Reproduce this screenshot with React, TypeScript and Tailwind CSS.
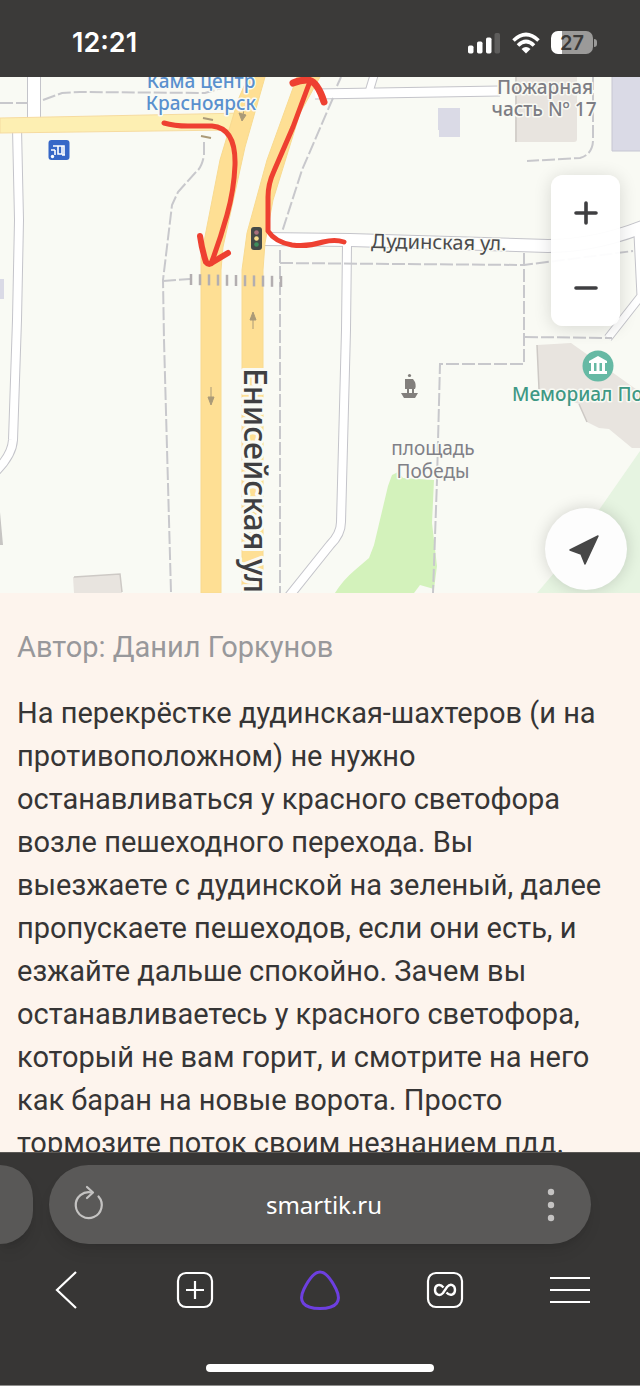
import React from "react";

type Road = { d: string; width: number };

const roads: Road[] = [
  { d: "M34 70V125", width: 14 },
  { d: "M17 128L19 220L17 320L13 440Q12 456 -6 473", width: 10 },
  { d: "M315 94L500 91", width: 11 },
  { d: "M369 92L375 72", width: 9 },
  { d: "M347 245L346 330L341 522Q341 534 330 545L286 600", width: 10 },
  { d: "M262 239L350 240L548 246Q595 246 645 226", width: 14 },
  { d: "M638 234L641 296L608 338", width: 9 },
];

const paths: string[] = [
  "M0 103H28",
  "M43 100L62 93L80 92L205 93L222 88",
  "M204 142L204 155Q202 168 195 173L178 192L172 205L163 280L164 340L171 593",
  "M163 281L190 279",
  "M333 98L302 170L282 232",
  "M280 250V593",
  "M280 263L524 265L633 251",
  "M524 253V364H440L437 480L433 593",
  "M525 337L612 338",
  "M593 77V140Q593 154 580 158L527 161",
  "M341 77L337 86",
];

function MapDrawing() {
  return (
    <svg
      viewBox="0 77 640 516"
      className="block w-full"
      role="img"
      aria-label="Карта: Дудинская ул. и Енисейская ул."
    >
      <rect x="0" y="77" width="640" height="516" fill="#f9faf4" />

      <g fill="#dadae6">
        <path d="M438 108H460V137H439V130H438Z" />
        <path d="M612 77H640V151H612Z" />
        <path d="M0 279H4V299H0Z" />
      </g>
      <path d="M612 77V151H640" fill="none" stroke="#c6c6d2" />
      <g fill="#e8e4df">
        <path d="M515 77H577V139Q577 142 574 142H515Z" />
        <path d="M537 345L571 343L640 392V448L632 448L609 429L599 428L587 422L579 404L539 389Z" />
        <path d="M73 577L120 574L122 593H74Z" />
      </g>
      <path d="M516 77V142M537 345L539 389M579 404L587 422M74 577L120 574L122 592" fill="none" stroke="#cdc9c5" strokeWidth="1.500" />
      <path d="M0 512L3 545H0Z" fill="#c7c5c3" />
      <path d="M392 475L398 472L403 478L434 480L432 523L437 566L434 589L420 585L414 593H335Q343 580 355 570L369 558L374 545L388 486Z" fill="#d3f2bb" />
      <path d="M640 451V593H537L560 566Z" fill="#e6f4e1" />

      <g fill="none" stroke="#c4c4ca" strokeLinejoin="round">
        {roads.map((r) => (
          <path key={r.d} d={r.d} strokeWidth={r.width} />
        ))}
      </g>
      <g fill="none" stroke="#ffffff" strokeLinejoin="round">
        {roads.map((r) => (
          <path key={r.d} d={r.d} strokeWidth={r.width - 2} />
        ))}
      </g>
      <g fill="none" stroke="#c8c8cc" strokeWidth="2" strokeDasharray="13 3">
        {paths.map((d) => (
          <path key={d} d={d} />
        ))}
      </g>

      <path d="M0 118L245 113L232 130L0 133Z" fill="#fdefb2" stroke="#f6dba0" />
      <g fill="#fedf94" stroke="#f8da90">
        <path d="M248 77H265L245 147L223 247L221 270V593H201V257L220 160L238 100Z" />
        <path d="M297 77H320L300 113L273 200L265 243L263 270V593H242V270L247 233L267 160Z" />
      </g>

      <g stroke="#b3aeb0" strokeWidth="2.500">
        {Array.from({ length: 11 }, (_, i) => (
          <path key={i} d={`M${191 + i * 9} ${274 + i / 5}V${285 + i / 5}`} />
        ))}
      </g>
      <g stroke="#aa9a78" fill="#aa9a78">
        <path d="M211 387V399" />
        <path d="M208 397L211 405L214 397Z" />
        <path d="M253 329V317" />
        <path d="M250 320L253 312L256 320Z" />
        <path d="M244 108L243 116" />
        <path d="M239 113L242 121L246 115Z" />
        <path d="M203 118L213 120M201 136L211 138" strokeWidth="2" />
      </g>

      <rect x="48.500" y="140" width="21" height="20" rx="3" fill="#3767c7" />
      <g fill="none" stroke="#ffffff" strokeWidth="1.6">
        <path d="M53 146H64V155M58 146V154H62V146M62 155H65M51 150H55" />
        <path d="M55 150V155" />
      </g>
      <circle cx="52.500" cy="156.500" r="1.700" fill="#ffffff" />

      <rect x="251" y="227" width="11" height="23" rx="3" fill="#454a47" />
      <circle cx="256.500" cy="232.500" r="2.300" fill="#a8707c" />
      <circle cx="256.500" cy="238.500" r="2.300" fill="#f6dc8a" />
      <circle cx="256.500" cy="244.500" r="2.300" fill="#3f8e5c" />

      <g fill="#827f7c">
        <circle cx="409.500" cy="375.500" r="1.600" />
        <path d="M405 379H413Q417 384 415 389H405Z" />
        <path d="M407 389H409V394H407ZM412 389H414V394H412Z" />
        <path d="M401 393H418L415 398H404Z" />
      </g>

      <circle cx="598" cy="366" r="15.500" fill="#66b9a4" />
      <g fill="#ffffff">
        <path d="M589 361L598 356L607 361V363H589Z" />
        <path d="M591 363H594V371H591ZM596.500 363H599.500V371H596.500ZM602 363H605V371H602Z" />
        <path d="M589 371H607V374H589Z" />
      </g>

      <g
        className="font-['Noto_Sans',sans-serif]"
        stroke="#f9faf4"
        strokeWidth="3"
        strokeLinejoin="round"
        paintOrder="stroke"
      >
        <g fill="#5990ce" fontSize="19" fontWeight="500" textAnchor="middle">
          <text x="201" y="88">Кама центр</text>
          <text x="201" y="110">Красноярск</text>
        </g>
        <g fill="#7d7d84" fontSize="19" fontWeight="500" textAnchor="middle">
          <text x="545" y="94">Пожарная</text>
          <text x="544" y="116">часть Nº 17</text>
        </g>
        <g fill="#808087" fontSize="19" textAnchor="middle">
          <text x="433" y="455">площадь</text>
          <text x="433" y="478">Победы</text>
        </g>
        <text x="512" y="401" fill="#3f9884" fontSize="19" fontWeight="500">Мемориал По</text>
        <text x="371" y="248" fill="#4a4a4c" fontSize="20" transform="rotate(1 370 248)">Дудинская ул.</text>
        <text x="0" y="0" fill="#3f3f41" fontSize="32" fontWeight="500" strokeWidth="6" transform="translate(244 368) rotate(90)">Енисейская ул</text>
      </g>

      <g fill="none" stroke="#ee4031" strokeWidth="5" strokeLinecap="round" strokeLinejoin="round">
        <path d="M164 123Q174 126 188 126H212Q236 128 235 165Q234 190 227 215Q220 240 212 261" />
        <path d="M200 236Q202 250 206 262Q209 266 213 262L228 253" strokeWidth="6" />
        <path d="M344 242Q335 239 323 242Q307 247 292 245Q275 242 268 231V197Q268 184 274 171L293 127L309 84" />
        <path d="M293 83Q300 80 307 80Q317 80 324 102" strokeWidth="7" />
      </g>
    </svg>
  );
}

function StatusBar() {
  return (
    <header className="flex h-[77px] shrink-0 items-center justify-between bg-[#3b3a39] pt-2 pr-[43px] pl-[72px]">
      <time className="font-['Inter',sans-serif] text-[27px] leading-8 font-semibold text-white">12:21</time>
      <div className="flex items-center gap-[11px]">
        <svg width="33" height="24" viewBox="0 0 33 24" aria-label="Сигнал">
          <rect x="0" y="14.500" width="5.500" height="8" rx="1.700" fill="#fff" />
          <rect x="9" y="10.500" width="5.500" height="12" rx="1.700" fill="#fff" />
          <rect x="18" y="6.500" width="5.500" height="16" rx="1.700" fill="#fff" />
          <rect x="26.500" y="2" width="5.500" height="20.500" rx="1.700" fill="#5e5d5c" />
        </svg>
        <svg width="28" height="22" viewBox="0 0 28 22" aria-label="Wi-Fi">
          <g fill="none" stroke="#fff" strokeWidth="3.600">
            <path d="M1.500 8.500Q14 -3.500 26.500 8.500" />
            <path d="M6 13.500Q14 5.500 22 13.500" />
          </g>
          <path d="M9.500 17Q14 13 18.500 17L14 21.500Z" fill="#fff" />
        </svg>
        <div className="flex items-center gap-px">
          <span className="flex h-[23px] w-[42px] items-center justify-center rounded-[7px] bg-linear-to-r from-white from-27% to-[#9b9a99] to-27% font-['Inter',sans-serif] text-[20px] leading-5 font-semibold text-[#3b3a39]">
            27
          </span>
          <span className="h-2 w-[3px] rounded-r-full bg-[#9b9a99]" />
        </div>
      </div>
    </header>
  );
}

function BrowserBar() {
  return (
    <footer className="shrink-0 border-t border-b border-t-[#5a5855] border-b-[#8f8e8c] bg-[#373635] pt-3">
      <div className="flex h-[79px] gap-4 pr-[49px]">
        <button type="button" aria-label="Предыдущая вкладка" className="w-[33px] rounded-r-full bg-[#595857] shadow-lg" />
        <div className="flex flex-1 items-center justify-between rounded-full bg-[#5a5958] px-6 shadow-lg">
          <button type="button" aria-label="Обновить">
            <svg width="40" height="40" viewBox="0 0 40 40" fill="none" stroke="#c4c3c2" strokeWidth="2.200" strokeLinecap="round" strokeLinejoin="round">
              <path d="M25.500 11.500A13 13 0 1 1 19 7.500" />
              <path d="M14 2L20 7.500L14 13" />
            </svg>
          </button>
          <a href="https://smartik.ru" className="font-['Noto_Sans',sans-serif] text-[24px] leading-8 text-white">
            smartik.ru
          </a>
          <button type="button" aria-label="Меню страницы">
            <svg width="32" height="36" viewBox="0 0 32 36" fill="#c4c3c2">
              <circle cx="16" cy="5" r="3.200" />
              <circle cx="16" cy="18" r="3.200" />
              <circle cx="16" cy="31" r="3.200" />
            </svg>
          </button>
        </div>
      </div>
      <nav className="grid h-[92px] grid-cols-5 place-items-center px-2">
        <button type="button" aria-label="Назад">
          <svg width="42" height="42" viewBox="0 0 42 42" fill="none" stroke="#fff" strokeWidth="2.200">
            <path d="M27 3L8 21L27 39" />
          </svg>
        </button>
        <button type="button" aria-label="Новая вкладка">
          <svg width="42" height="42" viewBox="0 0 42 42" fill="none" stroke="#fff" strokeWidth="2.200">
            <rect x="4" y="4" width="34" height="34" rx="8" />
            <path d="M21 12V30M12 21H30" />
          </svg>
        </button>
        <button type="button" aria-label="Алиса">
          <svg width="42" height="42" viewBox="0 0 42 42" fill="none" stroke="#6d3fe0" strokeWidth="3">
            <path d="M21 3C27 3 33 12 37 20C43 32 38 39.500 21 39.500S-1 32 5 20C9 12 15 3 21 3Z" />
          </svg>
        </button>
        <button type="button" aria-label="Вкладки">
          <svg width="42" height="42" viewBox="0 0 42 42" fill="none" stroke="#fff" strokeWidth="2.200">
            <rect x="4" y="4" width="34" height="34" rx="8" />
            <path d="M19.500 18.500C16 14 11 16 11 21S16 27.500 19 24L23 18C26.500 14 31 16 31 21S26 27.500 22.500 23.500" strokeWidth="2.400" />
          </svg>
        </button>
        <button type="button" aria-label="Меню">
          <svg width="42" height="42" viewBox="0 0 42 42" fill="none" stroke="#fff" strokeWidth="2.200">
            <path d="M1 9H41M1 21H41M1 33H41" />
          </svg>
        </button>
      </nav>
      <div className="flex h-[49px] items-center justify-center pt-[14px]">
        <div className="h-2 w-[228px] rounded-full bg-white" />
      </div>
    </footer>
  );
}

export default function App() {
  return (
    <div className="flex h-screen flex-col bg-[#fdf4ed]">
      <StatusBar />
      <main className="min-h-0 flex-1 overflow-y-auto [scrollbar-width:none]">
        <section className="relative">
          <MapDrawing />
          <div className="absolute top-[98px] right-5 flex h-[151px] w-[69px] flex-col rounded-xl bg-white/95 shadow-[0_2px_18px_rgba(0,0,0,0.14)]">
            <button type="button" aria-label="Приблизить" className="flex flex-1 items-center justify-center">
              <svg width="26" height="26" viewBox="0 0 26 26" stroke="#3f3f41" strokeWidth="3.600" strokeLinecap="round">
                <path d="M3 13H23M13 3V23" />
              </svg>
            </button>
            <button type="button" aria-label="Отдалить" className="flex flex-1 items-center justify-center">
              <svg width="26" height="26" viewBox="0 0 26 26" stroke="#3f3f41" strokeWidth="3.600" strokeLinecap="round">
                <path d="M3 13H23" />
              </svg>
            </button>
          </div>
          <button
            type="button"
            aria-label="Моё местоположение"
            className="absolute right-[13px] bottom-[3px] flex size-[82px] items-center justify-center rounded-full bg-[#fdfdfd] shadow-[0_0_16px_rgba(0,0,0,0.16)]"
          >
            <svg width="34" height="34" viewBox="0 0 34 34" fill="#474747" stroke="#474747" strokeWidth="1.500" strokeLinejoin="round">
              <path d="M29 4L16 32L12 22L1 18Z" />
            </svg>
          </button>
        </section>
        <article className="relative bg-[#fdf4ed] px-[17px] pt-[33px] font-['Roboto',sans-serif] text-[29px] leading-[43px] text-[#363535]">
          <p className="text-[#98989b]">Автор: Данил Горкунов</p>
          <p className="pt-[23px]">
            На перекрёстке дудинская-шахтеров (и на противоположном) не нужно останавливаться у красного светофора возле
            пешеходного перехода. Вы выезжаете с дудинской на зеленый, далее пропускаете пешеходов, если они есть, и
            езжайте дальше спокойно. Зачем вы останавливаетесь у красного светофора, который не вам горит, и смотрите на
            него как баран на новые ворота. Просто тормозите поток своим незнанием пдд.
          </p>
        </article>
      </main>
      <BrowserBar />
    </div>
  );
}
